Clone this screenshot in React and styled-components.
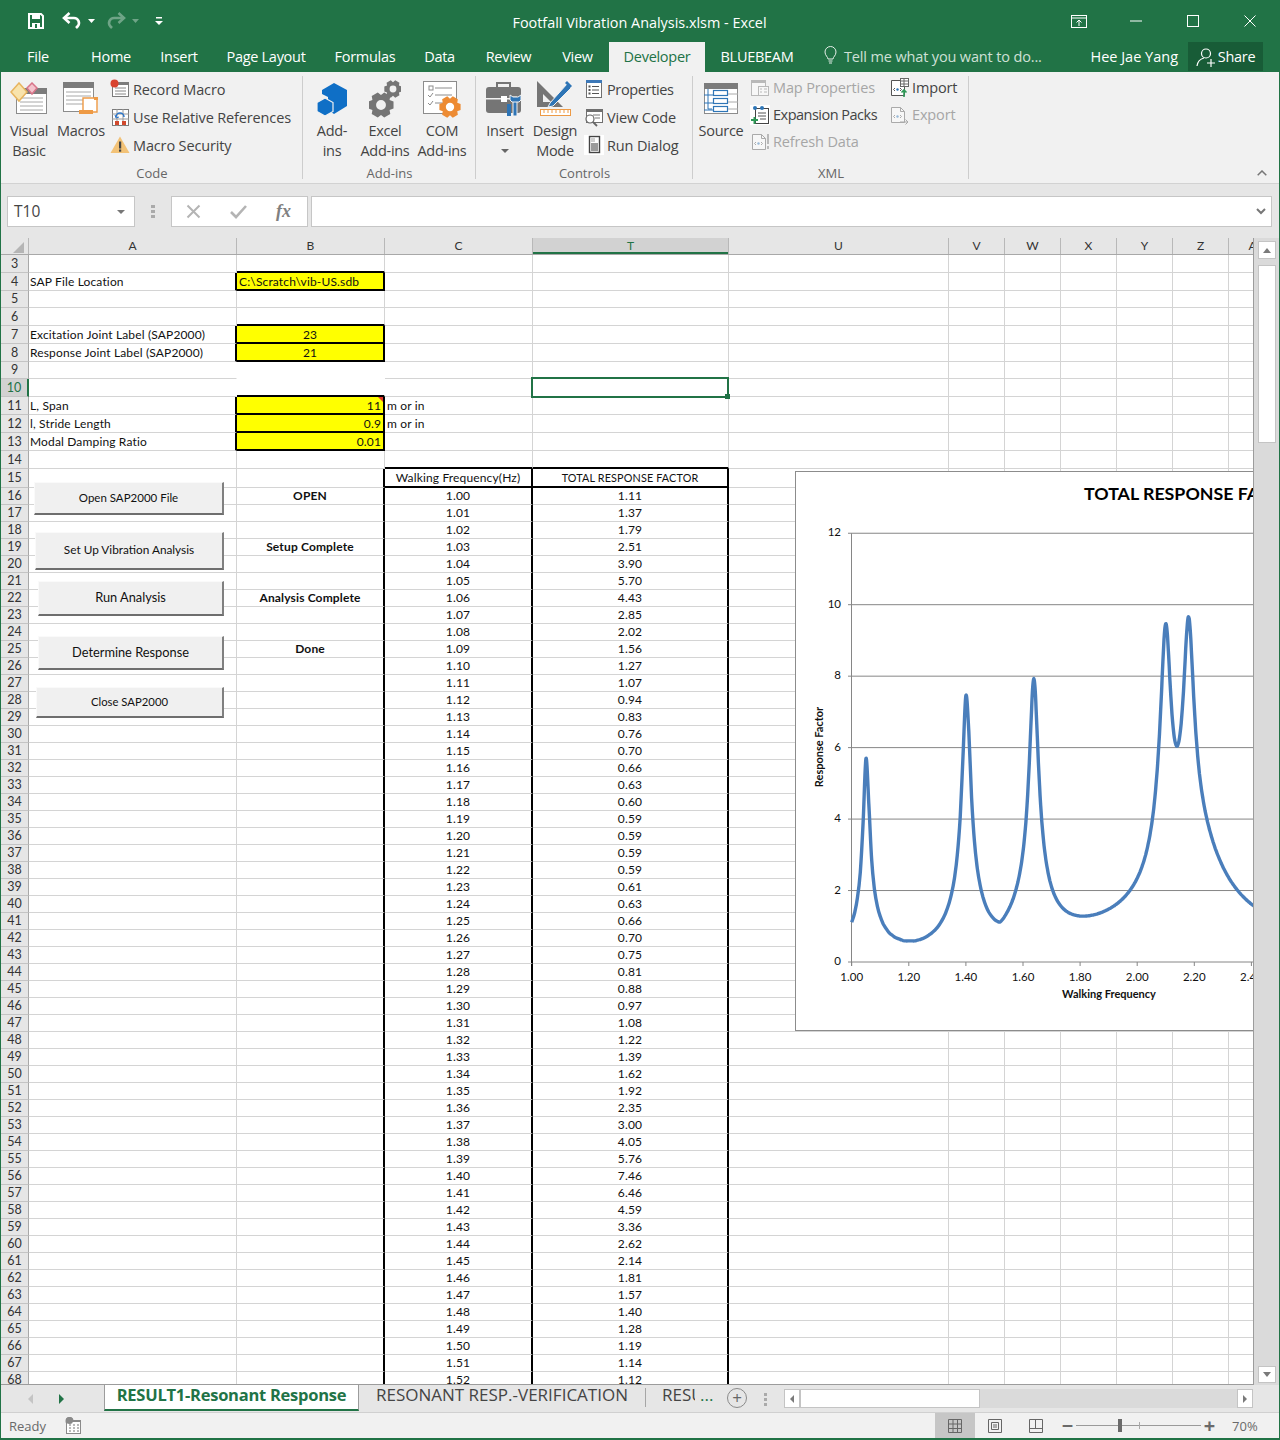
import React from "react";
import styled, { createGlobalStyle } from "styled-components";

const GlobalStyle = createGlobalStyle`
  html, body { margin: 0; padding: 0; background: #fff; }
  * { box-sizing: border-box; }
`;

const UI_FONT = `"Open Sans", "Noto Sans", sans-serif`;
const CELL_FONT = `Lato, "Noto Sans", sans-serif`;
const GREEN = "#217346";
const GRID = "#d4d4d4";

/* ---------- window chrome ---------- */

const Window = styled.div`
  width: 1280px;
  height: 1440px;
  padding: 0 1px 2px 1px;
  background: ${GREEN};
  display: flex;
  flex-direction: column;
  overflow: hidden;
  font-family: ${UI_FONT};
`;

const TitleBar = styled.div`
  height: 42px;
  flex: none;
  display: grid;
  grid-template-columns: 1fr auto 1fr;
  align-items: center;
  color: #fff;
`;

const Qat = styled.div`
  display: flex;
  align-items: center;
  padding-left: 25px;
`;

const QatSlot = styled.div`
  width: ${(p) => p.$w}px;
  display: flex;
  align-items: center;
  justify-content: center;
  opacity: ${(p) => (p.$off ? 0.35 : 1)};
`;

const WindowTitle = styled.div`
  font-size: 14.4px;
  padding-top: 3px;
  margin-left: -1px;
`;

const WindowButtons = styled.div`
  display: flex;
  justify-content: flex-end;
  align-items: center;
  padding-right: 1px;
`;

const WindowButton = styled.div`
  width: 57px;
  height: 40px;
  display: flex;
  align-items: center;
  justify-content: center;
`;

const TabStrip = styled.div`
  height: 30px;
  flex: none;
  display: flex;
  align-items: stretch;
  color: #fff;
  font-size: 14.5px;
`;

const RibbonTab = styled.div`
  width: ${(p) => p.$w}px;
  margin-left: ${(p) => p.$ml || 0}px;
  display: flex;
  align-items: center;
  justify-content: center;
  letter-spacing: -0.02em;
  padding-bottom: 2px;
  background: ${(p) => (p.$active ? "#f1f1f1" : "transparent")};
  color: ${(p) => (p.$active ? GREEN : "#fff")};
`;

const TellMe = styled.div`
  margin-left: 15px;
  padding-bottom: 2px;
  display: flex;
  align-items: center;
  gap: 7px;
  color: #cfe0d6;
  letter-spacing: -0.01em;
`;

const UserName = styled.div`
  margin-left: auto;
  margin-right: 10px;
  padding-bottom: 2px;
  display: flex;
  align-items: center;
`;

const ShareButton = styled.div`
  width: 75px;
  height: 29px;
  margin-right: 16px;
  background: #185c37;
  display: flex;
  align-items: center;
  justify-content: center;
  gap: 2px;
  letter-spacing: -0.02em;
`;

/* ---------- ribbon ---------- */

const Ribbon = styled.div`
  height: 112px;
  flex: none;
  background: #f1f1f1;
  border-bottom: 1px solid #d2d2d2;
  display: flex;
  color: #444;
  position: relative;
`;

const Group = styled.div`
  width: ${(p) => p.$w}px;
  padding-top: 4px;
  display: flex;
  flex-direction: column;
  position: relative;
  &::after {
    content: "";
    position: absolute;
    right: 0;
    top: 4px;
    bottom: 4px;
    width: 1px;
    background: #cdcdcd;
  }
`;

const GroupBody = styled.div`
  height: 89px;
  display: flex;
  padding-left: ${(p) => p.$pl || 0}px;
`;

const GroupLabel = styled.div`
  text-align: center;
  font-size: 13px;
  line-height: 17px;
  color: #666;
`;

const BigButton = styled.div`
  width: ${(p) => p.$w}px;
  display: flex;
  flex-direction: column;
  align-items: center;
  font-size: 14.5px;
  line-height: 20px;
  text-align: center;
  letter-spacing: -0.02em;
  white-space: nowrap;
`;

const BigIcon = styled.div`
  height: 45px;
  flex: none;
  display: flex;
  align-items: center;
  justify-content: center;
`;

const Caret = styled.div`
  width: 0;
  height: 0;
  margin-top: 8px;
  border-left: 4px solid transparent;
  border-right: 4px solid transparent;
  border-top: 4px solid #666;
`;

const SmallColumn = styled.div`
  width: ${(p) => (p.$w ? `${p.$w}px` : "auto")};
  margin-left: ${(p) => p.$ml || 0}px;
  margin-top: ${(p) => p.$mt ?? -1}px;
  display: flex;
  flex-direction: column;
`;

const SmallButton = styled.div`
  height: ${(p) => p.$h || 28}px;
  display: flex;
  align-items: center;
  gap: 3px;
  font-size: 14.5px;
  letter-spacing: ${(p) => p.$ls ?? -0.01}em;
  white-space: nowrap;
  color: ${(p) => (p.$off ? "#a6a6a6" : "#444")};
`;

const SmallIcon = styled.div`
  width: 20px;
  height: 20px;
  flex: none;
  display: flex;
  align-items: center;
  justify-content: center;
  opacity: ${(p) => (p.$off ? 0.45 : 1)};
`;

const CollapseCaret = styled.div`
  position: absolute;
  right: 12px;
  bottom: 7px;
  display: flex;
`;

/* ---------- formula bar ---------- */

const FormulaArea = styled.div`
  height: 54px;
  flex: none;
  background: #e6e6e6;
  padding: 12px 6px 11px 6px;
  display: flex;
  align-items: stretch;
`;

const NameBox = styled.div`
  width: 128px;
  background: #fff;
  border: 1px solid #c6c6c6;
  display: flex;
  align-items: center;
  justify-content: space-between;
  padding: 0 9px 2px 6px;
  font-size: 15.5px;
  color: #444;
`;

const SmallCaret = styled.div`
  width: 0;
  height: 0;
  margin-top: 2px;
  border-left: 4px solid transparent;
  border-right: 4px solid transparent;
  border-top: 4px solid #777;
`;

const GripDots = styled.div`
  width: 36px;
  flex: none;
  display: flex;
  flex-direction: column;
  align-items: center;
  justify-content: center;
  gap: 2px;
  & > i {
    width: 4px;
    height: 3px;
    background: #aaa;
  }
`;

const FunctionBox = styled.div`
  width: 137px;
  background: #fff;
  border: 1px solid #c6c6c6;
  display: flex;
  align-items: center;
  justify-content: space-between;
  padding: 0 16px 0 14px;
`;

const FxLabel = styled.div`
  font-family: "Liberation Serif", serif;
  font-style: italic;
  font-weight: 700;
  font-size: 18px;
  color: #808080;
`;

const FormulaInput = styled.div`
  flex: 1;
  margin-left: 3px;
  margin-right: 1px;
  background: #fff;
  border: 1px solid #c6c6c6;
  display: flex;
  align-items: center;
  justify-content: flex-end;
  padding-right: 5px;
`;

/* ---------- sheet ---------- */

const SheetRow = styled.div`
  flex: 1;
  min-height: 0;
  display: flex;
  background: #e6e6e6;
`;

const SheetMain = styled.div`
  width: 1253px;
  position: relative;
  overflow: hidden;
  border-right: 1px solid #9c9c9c;
  border-bottom: 1px solid #9c9c9c;
  background: #fff;
`;

const HeaderRow = styled.div`
  height: 17px;
  display: flex;
  background: #e6e6e6;
  border-bottom: 1px solid #a8a8a8;
`;

const Corner = styled.div`
  width: 28px;
  flex: none;
  border-right: 1px solid #b8b8b8;
  position: relative;
  &::after {
    content: "";
    position: absolute;
    right: 4px;
    bottom: 1px;
    border-style: solid;
    border-width: 0 0 11px 11px;
    border-color: transparent transparent #b5b5b5 transparent;
  }
`;

const ColHead = styled.div`
  width: ${(p) => p.$w}px;
  flex: none;
  text-align: center;
  font-family: ${CELL_FONT};
  font-size: 12px;
  line-height: 16px;
  overflow: hidden;
  color: ${(p) => (p.$active ? GREEN : "#333")};
  background: ${(p) => (p.$active ? "#d2d2d2" : "transparent")};
  border-right: 1px solid #b8b8b8;
  box-shadow: ${(p) => (p.$active ? `inset 0 -2px 0 ${GREEN}` : "none")};
`;

const Row = styled.div`
  height: ${(p) => p.$h}px;
  display: flex;
`;

const RowHead = styled.div`
  width: 28px;
  flex: none;
  text-align: center;
  font-family: ${CELL_FONT};
  font-size: 12.5px;
  line-height: ${(p) => p.$h - 1}px;
  color: ${(p) => (p.$active ? GREEN : "#333")};
  background: ${(p) => (p.$active ? "#d2d2d2" : "#e6e6e6")};
  border-bottom: 1px solid #c4c4c4;
  border-right: ${(p) => (p.$active ? `2px solid ${GREEN}` : "1px solid #a8a8a8")};
`;

const Cell = styled.div`
  width: ${(p) => p.$w}px;
  flex: none;
  position: relative;
  padding: 0 2px 0 ${(p) => (p.$first ? 1 : 2)}px;
  font-family: ${CELL_FONT};
  font-size: ${(p) => p.$fs || 12}px;
  letter-spacing: 0.15px;
  font-weight: ${(p) => (p.$bold ? 700 : 400)};
  line-height: ${(p) => p.$h - 1}px;
  white-space: nowrap;
  text-align: ${(p) => p.$align || "left"};
  color: #111;
  background: ${(p) => (p.$fill ? "#ffff00" : "transparent")};
  border-right: ${(p) => p.$right};
  border-bottom: ${(p) => p.$bottom};
`;

const CommentMark = styled.span`
  position: absolute;
  top: 0;
  right: 0;
  border-style: solid;
  border-width: 0 5px 5px 0;
  border-color: transparent #e0392b transparent transparent;
`;

const Selection = styled.div`
  position: absolute;
  left: 530px;
  top: 139px;
  width: 198px;
  height: 21px;
  border: 2px solid ${GREEN};
  &::after {
    content: "";
    position: absolute;
    right: -3px;
    bottom: -3px;
    width: 5px;
    height: 5px;
    background: ${GREEN};
  }
`;

const SheetButton = styled.div`
  position: absolute;
  left: ${(p) => p.$x - 1}px;
  top: ${(p) => p.$y - 238}px;
  width: ${(p) => p.$w}px;
  height: ${(p) => p.$h}px;
  padding-bottom: 2px;
  background: #f0f0f0;
  border-top: 1px solid #fafafa;
  border-left: 1px solid #fafafa;
  border-right: 2px solid #808080;
  border-bottom: 2px solid #6e6e6e;
  display: flex;
  align-items: center;
  justify-content: center;
  font-family: ${CELL_FONT};
  font-size: ${(p) => p.$fs}px;
  color: #111;
`;

const ChartBox = styled.div`
  position: absolute;
  left: 794px;
  top: 233px;
  width: 480px;
  height: 560px;
  background: #fff;
  border: 1px solid #8c8c8c;
`;

const ChartSvg = styled.svg`
  display: block;
  margin: -1px 0 0 -1px;
  font-family: ${CELL_FONT};
`;

const VScroll = styled.div`
  flex: 1;
  display: flex;
  flex-direction: column;
  align-items: center;
  padding: 3px 0 2px 1px;
  background: #dadada;
`;

const ScrollBtn = styled.div`
  width: 18px;
  height: ${(p) => p.$h}px;
  flex: none;
  background: #fff;
  border: 1px solid #c4c4c4;
  display: flex;
  align-items: center;
  justify-content: center;
  margin-top: ${(p) => p.$mt || 0}px;
  margin-bottom: ${(p) => p.$mb || 0}px;
`;

const ArrowUp = styled.div`
  border-left: 4px solid transparent;
  border-right: 4px solid transparent;
  border-${(p) => (p.$down ? "top" : "bottom")}: 5px solid #7a7a7a;
`;

const ArrowSide = styled.div`
  border-top: ${(p) => p.$s || 5}px solid transparent;
  border-bottom: ${(p) => p.$s || 5}px solid transparent;
  border-${(p) => (p.$right ? "left" : "right")}: ${(p) => p.$l || 5}px solid ${(p) => p.$c || "#7a7a7a"};
`;

/* ---------- sheet tabs + status ---------- */

const SheetTabs = styled.div`
  height: 28px;
  flex: none;
  display: flex;
  background: #e6e6e6;
  align-items: stretch;
  color: #444;
  border-bottom: 1px solid #d0d0d0;
`;

const TabNav = styled.div`
  width: 103px;
  flex: none;
  display: flex;
  align-items: center;
  gap: 26px;
  padding: 0 0 0 27px;
`;

const SheetTab = styled.div`
  width: ${(p) => p.$w}px;
  flex: none;
  height: 26px;
  padding-bottom: ${(p) => (p.$active ? 6 : 8)}px;
  display: flex;
  align-items: center;
  justify-content: center;
  font-size: ${(p) => (p.$active ? 16.5 : 17)}px;
  letter-spacing: ${(p) => (p.$active ? "-0.015em" : "0")};
  white-space: nowrap;
  font-weight: ${(p) => (p.$active ? 700 : 400)};
  color: ${(p) => (p.$active ? GREEN : "#444")};
  background: ${(p) => (p.$active ? "#fff" : "transparent")};
  border-left: ${(p) => (p.$active ? "1px solid #9c9c9c" : "none")};
  border-right: ${(p) => (p.$active ? "1px solid #9c9c9c" : "none")};
  border-bottom: ${(p) => (p.$active ? `2px solid ${GREEN}` : "none")};
`;

const TabDivider = styled.div`
  width: 1px;
  height: 19px;
  margin-top: 3px;
  flex: none;
  background: #a6a6a6;
`;

const ClippedTab = styled.div`
  width: 70px;
  flex: none;
  display: flex;
  align-items: center;
  height: 26px;
  padding-bottom: 8px;
  margin-left: 16px;
  font-size: 17px;
`;

const ClipText = styled.span`
  width: 33px;
  overflow: hidden;
  white-space: nowrap;
`;

const MoreDots = styled.span`
  color: ${GREEN};
  margin-left: 5px;
`;

const PlusCircle = styled.div`
  width: 20px;
  height: 20px;
  flex: none;
  margin: 3px 0 0 -5px;
  border: 1.5px solid #8a8a8a;
  border-radius: 50%;
  display: flex;
  align-items: center;
  justify-content: center;
  color: #666;
  font-size: 17px;
  line-height: 16px;
`;

const TabGrip = styled(GripDots)`
  width: 37px;
  padding-top: 1px;
  & > i {
    width: 3px;
    height: 3px;
  }
`;

const HScroll = styled.div`
  flex: 1;
  margin: 4px 26px 4px 0;
  background: #dadada;
  display: flex;
`;

const HScrollBtn = styled.div`
  width: 16px;
  flex: none;
  background: #fff;
  border: 1px solid #c4c4c4;
  display: flex;
  align-items: center;
  justify-content: center;
`;

const HThumb = styled.div`
  width: 180px;
  flex: none;
  background: #fff;
  border: 1px solid #c4c4c4;
  margin-right: auto;
`;

const StatusBar = styled.div`
  height: 25px;
  flex: none;
  background: #f1f1f1;
  display: flex;
  align-items: center;
  color: #6a6a6a;
  font-size: 13px;
  padding-left: 8px;
`;

const StatusIcon = styled.div`
  margin-left: 19px;
  display: flex;
`;

const ViewButton = styled.div`
  width: ${(p) => p.$w}px;
  height: 100%;
  flex: none;
  margin-left: ${(p) => p.$ml || 0}px;
  display: flex;
  align-items: center;
  justify-content: center;
  background: ${(p) => (p.$active ? "#c6c6c6" : "transparent")};
`;

const ZoomSlider = styled.div`
  width: 125px;
  height: 1px;
  flex: none;
  margin: 0 2px;
  background: #9a9a9a;
  position: relative;
`;

const ZoomTick = styled.span`
  position: absolute;
  left: 63px;
  top: -3px;
  width: 1px;
  height: 7px;
  background: #aaa;
`;

const ZoomThumb = styled.span`
  position: absolute;
  left: 42px;
  top: -6px;
  width: 4px;
  height: 13px;
  background: #6a6a6a;
`;

const ZoomSign = styled.div`
  font-size: 20px;
  font-weight: 700;
  color: #6a6a6a;
  line-height: 20px;
  width: 13px;
  margin-left: ${(p) => p.$ml || 0}px;
  text-align: center;
`;

const ZoomValue = styled.div`
  margin-left: 16px;
  font-size: 13px;
`;

/* ---------- icons ---------- */

const gearPath = (cx, cy, r1, r2, hole, teeth = 6) => {
  const pts = [];
  const step = (Math.PI * 2) / teeth;
  for (let i = 0; i < teeth; i++) {
    const a = i * step;
    [
      [-0.5, r1],
      [-0.26, r2],
      [0.26, r2],
      [0.5, r1],
    ].forEach(([t, r]) => {
      pts.push(
        `${(cx + r * Math.cos(a + t * step)).toFixed(2)} ${(cy + r * Math.sin(a + t * step)).toFixed(2)}`
      );
    });
  }
  return (
    `M${pts.join("L")}Z` +
    `M${cx - hole} ${cy}a${hole} ${hole} 0 1 0 ${hole * 2} 0a${hole} ${hole} 0 1 0 ${-hole * 2} 0Z`
  );
};

const Gear = ({ cx, cy, r, fill }) => (
  <path d={gearPath(cx, cy, r * 0.76, r, r * 0.38)} fill={fill} fillRule="evenodd" />
);

const TableLines = ({ x, y, w, rows, gap = 4, color = "#a8a8a8" }) => (
  <>
    {Array.from({ length: rows }).map((_, i) => (
      <line key={i} x1={x} x2={x + w} y1={y + i * gap} y2={y + i * gap} stroke={color} />
    ))}
  </>
);

const SaveIcon = () => (
  <svg width="20" height="20" viewBox="0 0 20 20">
    <path d="M3 3h12l2 2v12H3z" fill="none" stroke="#fff" strokeWidth="2" />
    <rect x="6" y="3" width="8" height="5" fill="#fff" />
    <rect x="6" y="12" width="8" height="5" fill="#fff" />
    <rect x="9" y="13" width="2" height="4" fill="#217346" />
  </svg>
);

const UndoIcon = ({ flip }) => (
  <svg width="20" height="18" viewBox="0 0 20 18" style={flip ? { transform: "scaleX(-1)" } : undefined}>
    <path d="M2 6h10a5 5 0 0 1 3.5 8.5L14 16" fill="none" stroke="#fff" strokeWidth="2.6" />
    <path d="M7.5 1 2 6l5.5 5" fill="none" stroke="#fff" strokeWidth="2.6" />
  </svg>
);

const MiniCaret = ({ color = "#fff" }) => (
  <svg width="8" height="5" viewBox="0 0 8 5">
    <path d="M0 0h7L3.500 4z" fill={color} />
  </svg>
);

const QatCustomize = () => (
  <svg width="8" height="9" viewBox="0 0 8 9">
    <rect x="1" y="0" width="6" height="1.500" fill="#fff" />
    <path d="M0 4h8L4 8z" fill="#fff" />
  </svg>
);

const RestoreIcon = () => (
  <svg width="16" height="13" viewBox="0 0 16 13">
    <rect x=".5" y=".5" width="15" height="12" fill="none" stroke="#fff" />
    <line x1="0" x2="16" y1="3" y2="3" stroke="#fff" />
    <path d="M8 11V5M5.500 7.500 8 5l2.500 2.500" fill="none" stroke="#fff" />
  </svg>
);

const MinIcon = () => (
  <svg width="12" height="2" viewBox="0 0 12 2">
    <line x1="0" x2="12" y1="1" y2="1" stroke="#fff" />
  </svg>
);

const MaxIcon = () => (
  <svg width="12" height="12" viewBox="0 0 12 12">
    <rect x=".5" y=".5" width="11" height="11" fill="none" stroke="#fff" />
  </svg>
);

const CloseIcon = () => (
  <svg width="12" height="12" viewBox="0 0 12 12">
    <path d="M.5.5l11 11M11.500.5l-11 11" stroke="#fff" />
  </svg>
);

const BulbIcon = () => (
  <svg width="13" height="20" viewBox="0 0 13 20">
    <path
      d="M4 13c0-2-3-3.500-3-7a5.500 5.500 0 0 1 11 0c0 3.500-3 5-3 7z"
      fill="none"
      stroke="#e6efe9"
    />
    <path d="M4.500 15h4M5 17h3" stroke="#e6efe9" />
  </svg>
);

const ShareIcon = () => (
  <svg width="20" height="20" viewBox="0 0 20 20">
    <circle cx="10" cy="6.500" r="4.500" fill="none" stroke="#fff" strokeWidth="1.200" />
    <path d="M1 19c.5-4 3-7 7-8M11 16h8M15 12v8" fill="none" stroke="#fff" strokeWidth="1.200" />
  </svg>
);

const VbaIcon = () => (
  <svg width="38" height="34" viewBox="0 0 38 34">
    <rect x="6.500" y="7.500" width="30" height="24" fill="#fff" stroke="#8c8c8c" />
    <rect x="6" y="6" width="31" height="6" fill="#7c7c7c" />
    <TableLines x={10} y={16} w={23} rows={4} />
    <path d="M1 10 9 1l8 9-8 9z" fill="#f8e3ac" stroke="#e7b45f" strokeWidth="1.500" />
    <path d="M17 6 22 1l5 5-5 6z" fill="#f4c3cd" stroke="#d8758a" strokeWidth="1.500" />
  </svg>
);

const MacrosIcon = () => (
  <svg width="38" height="36" viewBox="0 0 38 36">
    <rect x="1.500" y="1.500" width="30" height="29" fill="#fff" stroke="#8c8c8c" />
    <rect x="1" y="1" width="31" height="6" fill="#7c7c7c" />
    <TableLines x={4} y={11} w={25} rows={4} />
    <path d="M21 17h14v14H21z" fill="#fff" stroke="#ee9a45" strokeWidth="1.400" />
    <path d="M17 29h14v4H17z" fill="#ee9a45" />
    <rect x="32" y="16" width="4" height="3" fill="#ee9a45" />
  </svg>
);

const RecordIcon = () => (
  <svg width="20" height="20" viewBox="0 0 20 20">
    <rect x="2.500" y="3.500" width="16" height="14" fill="#fff" stroke="#7c7c7c" />
    <rect x="2" y="3" width="17" height="3" fill="#7c7c7c" />
    <TableLines x={5} y={9} w={11} rows={3} gap={3} color="#888" />
    <circle cx="4.500" cy="4.500" r="4" fill="#d9432f" />
  </svg>
);

const RelativeIcon = () => (
  <svg width="20" height="20" viewBox="0 0 20 20">
    <rect x="2.500" y="2.500" width="16" height="16" fill="#fff" stroke="#7c7c7c" />
    <path d="M2 7h17M2 12h17M7 2v17M13 2v17" stroke="#9a9a9a" />
    <path d="M6 10a4 4 0 0 1 8 0" fill="none" stroke="#2b74c8" strokeWidth="1.500" />
    <path d="M5 8l1 3 3-1" fill="none" stroke="#2b74c8" />
    <rect x="5" y="14" width="4" height="4" fill="#d24a2e" />
    <rect x="12" y="14" width="4" height="4" fill="#d24a2e" />
  </svg>
);

const WarnIcon = () => (
  <svg width="20" height="20" viewBox="0 0 20 20">
    <path d="M10 1.500 19.500 18H.5z" fill="#f2c277" />
    <rect x="9" y="6.500" width="2.200" height="7" fill="#444" />
    <rect x="9" y="14.500" width="2.200" height="2.200" fill="#444" />
  </svg>
);

const AddInsIcon = () => (
  <svg width="32" height="34" viewBox="0 0 32 34">
    <path d="M18 1l13 7v16l-13 8-6-4V15l-6-3v-4z" fill="#0f6fc6" />
    <path d="M9 16l8 4.500v9L9 34l-8-4.500v-9z" fill="#0f6fc6" stroke="#f1f1f1" strokeWidth="1.200" />
  </svg>
);

const GearsIcon = () => (
  <svg width="32" height="38" viewBox="0 0 32 38">
    <Gear cx={24} cy={9} r={9} fill="#757575" />
    <Gear cx={12} cy={25} r={13} fill="#757575" />
  </svg>
);

const ComIcon = () => (
  <svg width="40" height="38" viewBox="0 0 40 38">
    <rect x="1.500" y="1.500" width="33" height="32" fill="#fff" stroke="#8c8c8c" />
    <rect x="7" y="6" width="4" height="4" fill="none" stroke="#8c8c8c" />
    <path d="M13 8h17M13 15h17M13 23h8" stroke="#8c8c8c" />
    <path d="M6 15l2 2 3-4M6 23l2 2 3-4" fill="none" stroke="#8c8c8c" />
    <Gear cx={28} cy={27} r={11} fill="#ed8b33" />
  </svg>
);

const ToolboxIcon = () => (
  <svg width="40" height="38" viewBox="0 0 40 38">
    <path d="M12 7V3h13v4" fill="none" stroke="#757575" strokeWidth="2" />
    <rect x="1" y="7" width="35" height="26" rx="3" fill="#757575" />
    <rect x="0" y="18" width="37" height="1.500" fill="#f1f1f1" />
    <rect x="16" y="16" width="6" height="6" fill="#fff" />
    <path d="M28 17h4v19h-4z" fill="#2e75b6" stroke="#f1f1f1" />
    <path d="M25 15v5l2 2h7l2-2v-5l-3 2h-5z" fill="#2e75b6" stroke="#f1f1f1" />
    <path d="M22 24h4v12h-4z" fill="#2e75b6" />
  </svg>
);

const DesignIcon = () => (
  <svg width="38" height="38" viewBox="0 0 38 38">
    <path d="M1 1v26h26zM7 14v8h8z" fill="#757575" fillRule="evenodd" />
    <path d="M14 23 31 4l4 4-18 18-5 1z" fill="#2e75b6" stroke="#f1f1f1" />
    <path d="M31 1l5 5-2 2-5-5z" fill="#2e75b6" />
    <rect x="4.500" y="29.500" width="30" height="6" fill="#fff" stroke="#ed9a45" />
    <path d="M8 30v3M12 30v3M16 30v3M20 30v3M24 30v3M28 30v3M32 30v3" stroke="#ed9a45" />
  </svg>
);

const PropsIcon = () => (
  <svg width="18" height="20" viewBox="0 0 18 20">
    <rect x="1.500" y="1.500" width="15" height="17" fill="#fff" stroke="#6f6f6f" />
    <rect x="1" y="1" width="16" height="3" fill="#3c78b8" />
    <path d="M7 7.500h7M7 11h7M7 14.500h7" stroke="#555" />
    <rect x="3.500" y="6.500" width="2" height="2" fill="#555" />
    <rect x="3.500" y="10" width="2" height="2" fill="#555" />
    <rect x="3.500" y="13.500" width="2" height="2" fill="#555" />
  </svg>
);

const ViewCodeIcon = () => (
  <svg width="20" height="20" viewBox="0 0 20 20">
    <rect x="2.500" y="2.500" width="16" height="13" fill="#fff" stroke="#6f6f6f" />
    <rect x="2" y="2" width="17" height="3" fill="#6f6f6f" />
    <path d="M9 8h7M11 11h5" stroke="#777" />
    <circle cx="6" cy="12" r="4" fill="#fff" stroke="#666" strokeWidth="1.200" />
    <path d="M9 15l4 4" stroke="#666" strokeWidth="1.800" />
  </svg>
);

const RunDialogIcon = () => (
  <svg width="20" height="20" viewBox="0 0 20 20">
    <rect width="20" height="20" fill="#fff" />
    <rect x="5.500" y="1.500" width="10" height="16" fill="#fff" stroke="#444" strokeWidth="1.400" />
    <rect x="7" y="8" width="7" height="8" fill="#9a9a9a" />
    <rect x="7" y="3" width="4" height="4" fill="#cfcfcf" />
  </svg>
);

const SourceIcon = () => (
  <svg width="36" height="34" viewBox="0 0 36 34">
    <rect x="1.500" y="1.500" width="33" height="30" fill="#fff" stroke="#8c8c8c" />
    <rect x="1" y="1" width="34" height="6" fill="#7c7c7c" />
    <path d="M1 13h9M1 21h9M1 28h9M5 7v20h4" stroke="#2e75b6" fill="none" />
    <rect x="10.500" y="8.500" width="14" height="5" fill="#fff" stroke="#2e75b6" strokeWidth="1.200" />
    <rect x="10.500" y="16.500" width="14" height="5" fill="#fff" stroke="#2e75b6" strokeWidth="1.200" />
    <rect x="10.500" y="24.500" width="14" height="5" fill="#fff" stroke="#2e75b6" strokeWidth="1.200" />
    <path d="M25 12h10M25 20h10M25 27h10" stroke="#aaa" />
  </svg>
);

const MapPropsIcon = () => (
  <svg width="20" height="20" viewBox="0 0 20 20">
    <rect x="1.500" y="2.500" width="14" height="15" fill="#fff" stroke="#777" />
    <rect x="1" y="2" width="15" height="3" fill="#777" />
    <rect x="8.500" y="8.500" width="10" height="9" fill="#fff" stroke="#777" />
    <path d="M10 11h2M14 11h3M10 14h2M14 14h3" stroke="#777" />
  </svg>
);

const ExpansionIcon = () => (
  <svg width="20" height="20" viewBox="0 0 20 20">
    <rect width="20" height="20" fill="#fff" />
    <rect x="5.500" y="3.500" width="13" height="15" fill="#fff" stroke="#444" />
    <path d="M8 8h8M8 11h8M10 14h6" stroke="#555" />
    <circle cx="5" cy="3" r="2" fill="#2e75b6" />
    <circle cx="12" cy="3" r="2" fill="#2e75b6" />
    <path d="M1 15h7M4.500 12v7" stroke="#2e9a57" strokeWidth="2" />
  </svg>
);

const DocIcon = ({ children }) => (
  <svg width="20" height="20" viewBox="0 0 20 20">
    <path d="M2.500 2.500h9l4 4v11h-13z" fill="#fff" stroke="#555" />
    <path d="M11.500 2.500v4h4" fill="none" stroke="#555" />
    <path d="M6 10l-1.500 1.500L6 13M11 10l1.500 1.500L11 13" fill="none" stroke="#555" />
    <circle cx="8.500" cy="11.500" r="1.200" fill="#2e75b6" />
    {children}
  </svg>
);

const ImportIcon = () => (
  <DocIcon>
    <rect x="11.500" y="0.500" width="8" height="8" fill="#fff" stroke="#666" />
    <path d="M12 3h7M12 6h7M15 1v7" stroke="#666" />
    <path d="M15 19v-7M12.500 14.500 15 12l2.500 2.500" fill="none" stroke="#2e9a57" strokeWidth="1.600" />
  </DocIcon>
);

const ExportIcon = () => (
  <DocIcon>
    <path d="M11 17h8M16.500 14.500 19 17l-2.500 2.500" fill="none" stroke="#555" />
  </DocIcon>
);

const RefreshIcon = () => (
  <DocIcon>
    <rect x="17" y="2" width="2" height="10" fill="#777" />
    <rect x="17" y="14" width="2" height="3" fill="#777" />
  </DocIcon>
);

const WorkbookIcon = () => (
  <svg width="17" height="17" viewBox="0 0 17 17">
    <circle cx="4.500" cy="4" r="4" fill="#8a8a8a" />
    <rect x="1.500" y="3.500" width="14" height="13" fill="#fff" stroke="#8a8a8a" />
    <rect x="1" y="3" width="15" height="2" fill="#8a8a8a" />
    <path d="M4 8h2M8 8h2M12 8h2M4 11h2M8 11h2M12 11h2M4 14h2M8 14h2M12 14h2" stroke="#777" />
    <circle cx="4.500" cy="3.500" r="3.500" fill="#8a8a8a" />
  </svg>
);

const GridViewIcon = () => (
  <svg width="14" height="14" viewBox="0 0 14 14">
    <path d="M.5.5h13v13H.5zM5 .5v13M9.500.5v13M.5 5h13M.5 9.500h13" fill="none" stroke="#666" />
  </svg>
);

const PageViewIcon = () => (
  <svg width="14" height="14" viewBox="0 0 14 14">
    <path d="M.5.5h13v13H.5z" fill="none" stroke="#666" />
    <path d="M3.500 3.500h7v7h-7zM5 6h4M5 8h4" fill="none" stroke="#666" />
  </svg>
);

const BreakViewIcon = () => (
  <svg width="14" height="14" viewBox="0 0 14 14">
    <path d="M.5.500h13v13H.5zM.5 9.500h13M6.500.5v9" fill="none" stroke="#666" />
  </svg>
);

const RibbonCollapse = () => (
  <svg width="10" height="6" viewBox="0 0 10 6">
    <path d="M.7 5.300 5 1l4.300 4.300" fill="none" stroke="#777" strokeWidth="1.500" />
  </svg>
);

const FormulaDown = () => (
  <svg width="10" height="7" viewBox="0 0 10 7">
    <path d="M1 1l4 4 4-4" fill="none" stroke="#777" strokeWidth="2" />
  </svg>
);

const CancelGlyph = () => (
  <svg width="15" height="15" viewBox="0 0 15 15">
    <path d="M1.500 1.500l12 12M13.500 1.500l-12 12" stroke="#b4b4b4" strokeWidth="2" />
  </svg>
);

const CheckGlyph = () => (
  <svg width="17" height="14" viewBox="0 0 17 14">
    <path d="M1 7l5 5L16 1" fill="none" stroke="#b4b4b4" strokeWidth="2.600" />
  </svg>
);

/* ---------- data ---------- */

// AA runs past the edge of the sheet, it gets clipped
const COLS = [
  ["A", 208],
  ["B", 148],
  ["C", 148],
  ["T", 196],
  ["U", 220],
  ["V", 56],
  ["W", 56],
  ["X", 56],
  ["Y", 56],
  ["Z", 56],
  ["AA", 56],
];

const FACTORS = [
  1.11, 1.37, 1.79, 2.51, 3.9, 5.7, 4.43, 2.85, 2.02, 1.56, 1.27, 1.07, 0.94, 0.83, 0.76, 0.7, 0.66,
  0.63, 0.6, 0.59, 0.59, 0.59, 0.59, 0.61, 0.63, 0.66, 0.7, 0.75, 0.81, 0.88, 0.97, 1.08, 1.22, 1.39,
  1.62, 1.92, 2.35, 3.0, 4.05, 5.76, 7.46, 6.46, 4.59, 3.36, 2.62, 2.14, 1.81, 1.57, 1.4, 1.28, 1.19,
  1.14, 1.12,
];

const TALL_ROWS = { 5: 17, 9: 17, 15: 19 };

const rowHeight = (n) => (n >= 16 ? 17 : TALL_ROWS[n] || 18);

const cellText = {
  "4A": { text: "SAP File Location" },
  "7A": { text: "Excitation Joint Label (SAP2000)" },
  "8A": { text: "Response Joint Label (SAP2000)" },
  "11A": { text: "L, Span" },
  "12A": { text: "l, Stride Length" },
  "13A": { text: "Modal Damping Ratio" },
  "4B": { text: "C:\\Scratch\\vib-US.sdb" },
  "7B": { text: "23", align: "center" },
  "8B": { text: "21", align: "center" },
  "11B": { text: "11", align: "right", comment: true },
  "12B": { text: "0.9", align: "right" },
  "13B": { text: "0.01", align: "right" },
  "11C": { text: "m or in" },
  "12C": { text: "m or in" },
  "15C": { text: "Walking Frequency(Hz)", align: "center" },
  "15T": { text: "TOTAL RESPONSE FACTOR", align: "center", fs: 10.8 },
  "16B": { text: "OPEN", align: "center", bold: true },
  "19B": { text: "Setup Complete", align: "center", bold: true },
  "22B": { text: "Analysis Complete", align: "center", bold: true },
  "25B": { text: "Done", align: "center", bold: true },
};

const YELLOW_ROWS = [4, 7, 8, 11, 12, 13];

const BUTTONS = [
  { label: "Open SAP2000 File", x: 34, y: 482, w: 190, h: 33, fs: 11.5 },
  { label: "Set Up Vibration Analysis", x: 35, y: 532, w: 189, h: 38, fs: 11.8 },
  { label: "Run Analysis", x: 38, y: 581, w: 186, h: 35, fs: 12.8 },
  { label: "Determine Response", x: 38, y: 636, w: 186, h: 34, fs: 12.8 },
  { label: "Close SAP2000", x: 36, y: 687, w: 188, h: 31, fs: 11.3 },
];

const cellBorders = (col, n) => {
  const black = "2px solid #000";
  const grid = `1px solid ${GRID}`;
  let right = grid;
  let bottom = grid;
  if ((col === "A" || col === "B") && YELLOW_ROWS.includes(n)) right = black;
  if ((col === "B" || col === "C" || col === "T") && n >= 15) right = black;
  if ((col === "A" || col === "B") && (n === 9 || n === 10)) right = "1px solid #fff";
  if (col === "B" && [3, 4, 6, 7, 8, 10, 11, 12, 13].includes(n)) bottom = black;
  if (col === "B" && n === 9) bottom = "1px solid #fff";
  if ((col === "C" || col === "T") && (n === 14 || n === 15)) bottom = black;
  return { right, bottom };
};

const textFor = (col, n) => {
  const t = cellText[`${n}${col}`];
  if (t) return t;
  if (n >= 16 && n - 16 < FACTORS.length) {
    if (col === "C") return { text: (1 + (n - 16) / 100).toFixed(2), align: "center" };
    if (col === "T") return { text: FACTORS[n - 16].toFixed(2), align: "center" };
  }
  return {};
};

const chartX = (f) => 851.7 + (f - 1) * 285.5;
const chartY = (v) => 962 - v * 35.73;

// past the table the curve is a sum of resonance peaks fitted to the chart
const PEAKS = [
  [1.638, 7.9, 0.0156],
  [2.1, 9.0, 0.019],
  [2.18, 8.9, 0.019],
  [2.2, 3.2, 0.085],
];

const modelValue = (f) => {
  let sum = 0.12;
  PEAKS.forEach(([f0, h, w]) => {
    const x = (f - f0) / w;
    sum += (h * h) / (1 + x * x);
  });
  return Math.sqrt(sum) - Math.max(0, (1.58 - f) * 2);
};

const curvePoints = () => {
  const pts = FACTORS.map((v, i) => [1 + i / 100, v]);
  for (let f = 1.53; f <= 2.43; f += 0.004) pts.push([f, modelValue(f)]);
  return pts.map(([f, v]) => [chartX(f), chartY(v)]);
};

const curvePath = () => {
  const pts = curvePoints();
  let d = `M${pts[0][0]} ${pts[0][1]}`;
  for (let i = 0; i < pts.length - 1; i++) {
    const p0 = pts[i - 1] || pts[i];
    const p1 = pts[i];
    const p2 = pts[i + 1];
    const p3 = pts[i + 2] || p2;
    const c1 = [p1[0] + (p2[0] - p0[0]) / 6, p1[1] + (p2[1] - p0[1]) / 6];
    const c2 = [p2[0] - (p3[0] - p1[0]) / 6, p2[1] - (p3[1] - p1[1]) / 6];
    d += `C${c1[0].toFixed(1)} ${c1[1].toFixed(1)} ${c2[0].toFixed(1)} ${c2[1].toFixed(1)} ${p2[0].toFixed(1)} ${p2[1].toFixed(1)}`;
  }
  return d;
};

const Chart = () => (
  <ChartBox>
    <ChartSvg width="480" height="560" viewBox="795 471 480 560">
      <text x="1084" y="500" fontSize="17.8" fontWeight="700" fill="#000">
        TOTAL RESPONSE FACTOR
      </text>
      {[0, 2, 4, 6, 8, 10, 12].map((v) => (
        <g key={v}>
          <line x1="848" x2="1260" y1={chartY(v)} y2={chartY(v)} stroke="#868686" />
          <text x="841" y={chartY(v) + 3} fontSize="11.500" textAnchor="end" fill="#111">
            {v}
          </text>
        </g>
      ))}
      <line x1="851.500" x2="851.500" y1={chartY(12)} y2="966" stroke="#868686" />
      {[1, 1.2, 1.4, 1.6, 1.8, 2, 2.2, 2.4].map((f) => (
        <g key={f}>
          <line x1={chartX(f)} x2={chartX(f)} y1="962" y2="966" stroke="#868686" />
          <text x={chartX(f)} y="981" fontSize="11.500" textAnchor="middle" fill="#111">
            {f.toFixed(2)}
          </text>
        </g>
      ))}
      <path d={curvePath()} fill="none" stroke="#4a7ebb" strokeWidth="3.400" />
      <text x="1109" y="998" fontSize="11" fontWeight="700" textAnchor="middle" fill="#111">
        Walking Frequency
      </text>
      <text
        x="0"
        y="0"
        fontSize="11"
        fontWeight="700"
        textAnchor="middle"
        fill="#111"
        transform="translate(823 747) rotate(-90)"
      >
        Response Factor
      </text>
    </ChartSvg>
  </ChartBox>
);

const Sheet = () => {
  const rows = [];
  for (let n = 3; n <= 68; n++) rows.push(n);
  return (
    <SheetRow>
      <SheetMain>
        <HeaderRow>
          <Corner />
          {COLS.map(([name, w]) => (
            <ColHead key={name} $w={w} $active={name === "T"}>
              {name}
            </ColHead>
          ))}
        </HeaderRow>
        {rows.map((n) => {
          const h = rowHeight(n);
          return (
            <Row key={n} $h={h}>
              <RowHead $h={h} $active={n === 10}>
                {n}
              </RowHead>
              {COLS.map(([col, w]) => {
                const { text, align, bold, comment, fs } = textFor(col, n);
                const { right, bottom } = cellBorders(col, n);
                return (
                  <Cell
                    key={col}
                    $w={w}
                    $h={h}
                    $fs={fs}
                    $first={col === "A"}
                    $align={align}
                    $bold={bold}
                    $fill={col === "B" && YELLOW_ROWS.includes(n)}
                    $right={right}
                    $bottom={bottom}
                  >
                    {text}
                    {comment && <CommentMark />}
                  </Cell>
                );
              })}
            </Row>
          );
        })}
        <Selection />
        {BUTTONS.map((b) => (
          <SheetButton key={b.label} $x={b.x} $y={b.y} $w={b.w} $h={b.h} $fs={b.fs}>
            {b.label}
          </SheetButton>
        ))}
        <Chart />
      </SheetMain>
      <VScroll>
        <ScrollBtn $h={18} $mb={6}>
          <ArrowUp />
        </ScrollBtn>
        <ScrollBtn $h={178} />
        <ScrollBtn $h={17} $mt={923}>
          <ArrowUp $down />
        </ScrollBtn>
      </VScroll>
    </SheetRow>
  );
};

export default function App() {
  return (
    <>
      <GlobalStyle />
      <Window>
        <TitleBar>
          <Qat>
            <QatSlot $w={20}>
              <SaveIcon />
            </QatSlot>
            <QatSlot $w={16} />
            <QatSlot $w={20}>
              <UndoIcon />
            </QatSlot>
            <QatSlot $w={20}>
              <MiniCaret />
            </QatSlot>
            <QatSlot $w={28} $off>
              <UndoIcon flip />
            </QatSlot>
            <QatSlot $w={12} $off>
              <MiniCaret />
            </QatSlot>
            <QatSlot $w={34}>
              <QatCustomize />
            </QatSlot>
          </Qat>
          <WindowTitle>Footfall Vibration Analysis.xlsm - Excel</WindowTitle>
          <WindowButtons>
            <WindowButton>
              <RestoreIcon />
            </WindowButton>
            <WindowButton>
              <MinIcon />
            </WindowButton>
            <WindowButton>
              <MaxIcon />
            </WindowButton>
            <WindowButton>
              <CloseIcon />
            </WindowButton>
          </WindowButtons>
        </TitleBar>

        <TabStrip>
          <RibbonTab $w={74}>File</RibbonTab>
          <RibbonTab $w={72}>Home</RibbonTab>
          <RibbonTab $w={64}>Insert</RibbonTab>
          <RibbonTab $w={110}>Page Layout</RibbonTab>
          <RibbonTab $w={88}>Formulas</RibbonTab>
          <RibbonTab $w={61}>Data</RibbonTab>
          <RibbonTab $w={77}>Review</RibbonTab>
          <RibbonTab $w={61}>View</RibbonTab>
          <RibbonTab $w={96} $ml={1} $active>Developer</RibbonTab>
          <RibbonTab $w={104}>BLUEBEAM</RibbonTab>
          <TellMe>
            <BulbIcon />
            Tell me what you want to do...
          </TellMe>
          <UserName>Hee Jae Yang</UserName>
          <ShareButton>
            <ShareIcon />
            Share
          </ShareButton>
        </TabStrip>

        <Ribbon>
          <Group $w={302}>
            <GroupBody $pl={1}>
              <BigButton $w={54}>
                <BigIcon><VbaIcon /></BigIcon>
                Visual
                <br />
                Basic
              </BigButton>
              <BigButton $w={50}>
                <BigIcon><MacrosIcon /></BigIcon>
                Macros
              </BigButton>
              <SmallColumn $ml={4}>
                <SmallButton>
                  <SmallIcon><RecordIcon /></SmallIcon>
                  Record Macro
                </SmallButton>
                <SmallButton>
                  <SmallIcon><RelativeIcon /></SmallIcon>
                  Use Relative References
                </SmallButton>
                <SmallButton>
                  <SmallIcon><WarnIcon /></SmallIcon>
                  Macro Security
                </SmallButton>
              </SmallColumn>
            </GroupBody>
            <GroupLabel>Code</GroupLabel>
          </Group>

          <Group $w={173}>
            <GroupBody $pl={3}>
              <BigButton $w={52}>
                <BigIcon><AddInsIcon /></BigIcon>
                Add-
                <br />
                ins
              </BigButton>
              <BigButton $w={54}>
                <BigIcon><GearsIcon /></BigIcon>
                Excel
                <br />
                Add-ins
              </BigButton>
              <BigButton $w={60}>
                <BigIcon><ComIcon /></BigIcon>
                COM
                <br />
                Add-ins
              </BigButton>
            </GroupBody>
            <GroupLabel>Add-ins</GroupLabel>
          </Group>

          <Group $w={217}>
            <GroupBody $pl={4}>
              <BigButton $w={50}>
                <BigIcon><ToolboxIcon /></BigIcon>
                Insert
                <Caret />
              </BigButton>
              <BigButton $w={50}>
                <BigIcon><DesignIcon /></BigIcon>
                Design
                <br />
                Mode
              </BigButton>
              <SmallColumn $ml={4}>
                <SmallButton $ls={-0.025}>
                  <SmallIcon><PropsIcon /></SmallIcon>
                  Properties
                </SmallButton>
                <SmallButton>
                  <SmallIcon><ViewCodeIcon /></SmallIcon>
                  View Code
                </SmallButton>
                <SmallButton>
                  <SmallIcon><RunDialogIcon /></SmallIcon>
                  Run Dialog
                </SmallButton>
              </SmallColumn>
            </GroupBody>
            <GroupLabel>Controls</GroupLabel>
          </Group>

          <Group $w={276}>
            <GroupBody $pl={3}>
              <BigButton $w={50}>
                <BigIcon><SourceIcon /></BigIcon>
                Source
              </BigButton>
              <SmallColumn $w={139} $ml={4} $mt={-2}>
                <SmallButton $h={27} $off>
                  <SmallIcon $off><MapPropsIcon /></SmallIcon>
                  Map Properties
                </SmallButton>
                <SmallButton $h={27} $ls={-0.035}>
                  <SmallIcon><ExpansionIcon /></SmallIcon>
                  Expansion Packs
                </SmallButton>
                <SmallButton $h={27} $off>
                  <SmallIcon $off><RefreshIcon /></SmallIcon>
                  Refresh Data
                </SmallButton>
              </SmallColumn>
              <SmallColumn $mt={-2}>
                <SmallButton $h={27}>
                  <SmallIcon><ImportIcon /></SmallIcon>
                  Import
                </SmallButton>
                <SmallButton $h={27} $off>
                  <SmallIcon $off><ExportIcon /></SmallIcon>
                  Export
                </SmallButton>
              </SmallColumn>
            </GroupBody>
            <GroupLabel>XML</GroupLabel>
          </Group>
          <CollapseCaret>
            <RibbonCollapse />
          </CollapseCaret>
        </Ribbon>

        <FormulaArea>
          <NameBox>
            T10
            <SmallCaret />
          </NameBox>
          <GripDots>
            <i />
            <i />
            <i />
          </GripDots>
          <FunctionBox>
            <CancelGlyph />
            <CheckGlyph />
            <FxLabel>fx</FxLabel>
          </FunctionBox>
          <FormulaInput>
            <FormulaDown />
          </FormulaInput>
        </FormulaArea>

        <Sheet />

        <SheetTabs>
          <TabNav>
            <ArrowSide $c="#c4c4c4" />
            <ArrowSide $right $c={GREEN} />
          </TabNav>
          <SheetTab $w={255} $active>RESULT1-Resonant Response</SheetTab>
          <SheetTab $w={286}>RESONANT RESP.-VERIFICATION</SheetTab>
          <TabDivider />
          <ClippedTab>
            <ClipText>RESU</ClipText>
            <MoreDots>...</MoreDots>
          </ClippedTab>
          <PlusCircle>+</PlusCircle>
          <TabGrip>
            <i />
            <i />
            <i />
          </TabGrip>
          <HScroll>
            <HScrollBtn>
              <ArrowSide $s={4} $l={4} />
            </HScrollBtn>
            <HThumb />
            <HScrollBtn>
              <ArrowSide $right $s={4} $l={4} />
            </HScrollBtn>
          </HScroll>
        </SheetTabs>

        <StatusBar>
          Ready
          <StatusIcon>
            <WorkbookIcon />
          </StatusIcon>
          <ViewButton $w={40} $ml={853} $active>
            <GridViewIcon />
          </ViewButton>
          <ViewButton $w={40}>
            <PageViewIcon />
          </ViewButton>
          <ViewButton $w={41}>
            <BreakViewIcon />
          </ViewButton>
          <ZoomSign $ml={5}>−</ZoomSign>
          <ZoomSlider>
            <ZoomTick />
            <ZoomThumb />
          </ZoomSlider>
          <ZoomSign>+</ZoomSign>
          <ZoomValue>70%</ZoomValue>
        </StatusBar>
      </Window>
    </>
  );
}
